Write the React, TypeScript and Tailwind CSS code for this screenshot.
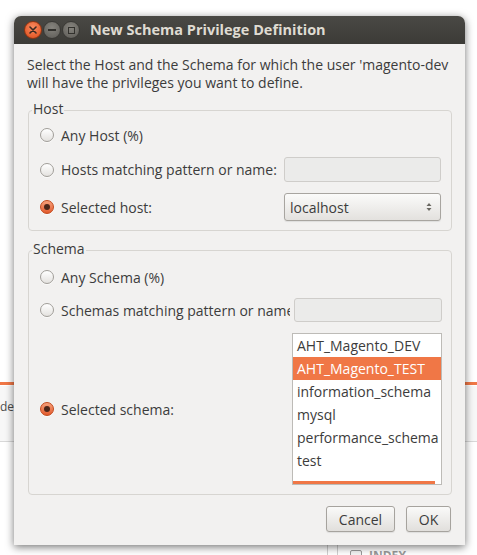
import React from 'react';

const font = { fontFamily: '"Open Sans", "Noto Sans", sans-serif' };

const Radio: React.FC<{ checked?: boolean }> = ({ checked }) =>
    checked ? (
        <span className="flex h-[14px] w-[14px] shrink-0 items-center justify-center rounded-full border border-[#c2491c] bg-gradient-to-b from-[#f6a07a] to-[#e2592a] shadow-[0_1px_0_rgba(255,255,255,0.6)]">
            <span className="h-[6px] w-[6px] rounded-full bg-[#4b2619]" />
        </span>
    ) : (
        <span className="h-[14px] w-[14px] shrink-0 rounded-full border border-[#a19e99] bg-gradient-to-b from-[#ffffff] to-[#e4e2df] shadow-[0_1px_0_rgba(255,255,255,0.6)]" />
    );

const RadioRow: React.FC<{ label: string; checked?: boolean; width: string }> = ({ label, checked, width }) => (
    <div className={`flex ${width} shrink-0 items-center gap-[7px] overflow-hidden pl-[11px]`}>
        <Radio checked={checked} />
        <span className="whitespace-nowrap">{label}</span>
    </div>
);

const schemas = ['AHT_Magento_DEV', 'AHT_Magento_TEST', 'information_schema', 'mysql', 'performance_schema', 'test'];

const entry = 'rounded-[3px] border border-[#cfcdca] bg-[#ebebea]';
const button =
    'h-[26px] rounded-[3px] border border-[#a6a39e] bg-gradient-to-b from-[#fafaf9] to-[#e1dfdc] shadow-[0_1px_1px_rgba(0,0,0,0.08)]';

export default function App() {
    return (
        <div className="relative h-[555px] w-[477px] overflow-hidden bg-white text-[14px] text-[#3c3c3c]" style={font}>
            {/* background app behind the dialog */}
            <div className="absolute left-0 top-[382px] h-[3px] w-[477px] bg-[#f07746]" />
            <div className="absolute left-0 top-[386px] h-[55px] w-[477px] bg-[#f7f7f7]" />
            <div className="absolute left-0 top-[398px] text-[12px] leading-[17px] text-[#4c4c4c]">ded</div>
            <div className="absolute left-0 top-[441px] h-px w-[477px] bg-[#d8d8d8]" />
            <div className="absolute left-[327px] top-[540px] h-[20px] w-px bg-[#d0d0d0]" />
            <div className="absolute left-[337px] top-[540px] h-[20px] w-px bg-[#d0d0d0]" />
            <div className="absolute left-[350px] top-[550px] h-[12px] w-[12px] rounded-[2px] border border-[#9a9a9a] bg-[#f4f4f4]" />
            <div className="absolute left-[369px] top-[547px] text-[12px] font-bold text-[#9a9a9a]">INDEX</div>

            {/* dialog window */}
            <div className="absolute left-[14px] top-[16px] flex h-[529px] w-[451px] flex-col overflow-hidden rounded-t-[7px] bg-[#f2f1f0] shadow-[0_2px_9px_rgba(0,0,0,0.55)]">
                <div className="flex h-[28px] shrink-0 items-center bg-gradient-to-b from-[#4a4945] to-[#3c3b37] pl-[10px]">
                    <div className="flex items-center gap-[1px]">
                        <span className="flex h-[18px] w-[18px] items-center justify-center rounded-full border border-[#8e3513] bg-[radial-gradient(circle_at_50%_35%,#f88c62,#dd4a17)]">
                            <svg width="8" height="8" viewBox="0 0 8 8"><path d="M1 1L7 7M7 1L1 7" stroke="#3a2a22" strokeWidth="1.6" strokeLinecap="round" /></svg>
                        </span>
                        <span className="flex h-[18px] w-[18px] items-center justify-center rounded-full border border-[#3a3935] bg-[radial-gradient(circle_at_50%_35%,#86847e,#5c5a55)]">
                            <span className="h-[1.5px] w-[8px] bg-[#32312d]" />
                        </span>
                        <span className="flex h-[18px] w-[18px] items-center justify-center rounded-full border border-[#3a3935] bg-[radial-gradient(circle_at_50%_35%,#86847e,#5c5a55)]">
                            <span className="h-[7px] w-[7px] border border-[#32312d]" />
                        </span>
                    </div>
                    <span className="ml-[10px] text-[14.5px] font-bold text-[#dfdbd2]">New Schema Privilege Definition</span>
                </div>

                <div className="flex flex-1 flex-col px-[13px]">
                    <p className="mt-[12px] leading-[18px]">
                        Select the Host and the Schema for which the user 'magento-dev<br />
                        will have the privileges you want to define.
                    </p>

                    {/* Host frame */}
                    <div className="relative ml-px mt-[18px] flex h-[121px] flex-col rounded-[4px] border border-[#d7d5d1] pt-[11px]">
                        <span className="absolute left-[3px] top-[-11px] bg-[#f2f1f0] px-px leading-[17px]">Host</span>
                        <div className="flex h-[26px]">
                            <RadioRow label="Any Host (%)" width="w-[255px]" />
                        </div>
                        <div className="mt-[9px] flex h-[25px]">
                            <RadioRow label="Hosts matching pattern or name:" width="w-[255px]" />
                            <div className={`${entry} w-[157px]`} />
                        </div>
                        <div className="mt-[11px] flex h-[28px]">
                            <RadioRow label="Selected host:" checked width="w-[255px]" />
                            <div className="flex w-[157px] items-center justify-between rounded-[3px] border border-[#a8a5a0] bg-gradient-to-b from-[#fbfbfa] to-[#e3e1de] pl-[5px] pr-[8px] shadow-[0_1px_1px_rgba(0,0,0,0.08)]">
                                <span>localhost</span>
                                <svg width="6" height="10" viewBox="0 0 6 10"><path d="M0.5 4L3 1L5.5 4ZM0.5 6L3 9L5.5 6Z" fill="#6b6963" /></svg>
                            </div>
                        </div>
                    </div>

                    {/* Schema frame */}
                    <div className="relative ml-px mt-[19px] flex h-[245px] flex-col rounded-[4px] border border-[#d7d5d1] pt-[13px]">
                        <span className="absolute left-[3px] top-[-11px] bg-[#f2f1f0] px-px leading-[17px]">Schema</span>
                        <div className="flex h-[26px]">
                            <RadioRow label="Any Schema (%)" width="w-[264px]" />
                        </div>
                        <div className="mt-[8px] flex h-[24px]">
                            <RadioRow label="Schemas matching pattern or name:" width="w-[261px]" />
                            <div className={`${entry} ml-[4px] w-[148px]`} />
                        </div>
                        <div className="mt-[11px] flex h-[152px]">
                            <RadioRow label="Selected schema:" checked width="w-[263px]" />
                            <div className="relative w-[150px] overflow-hidden border border-[#bdbbb7] bg-white">
                                {schemas.map((s, i) => (
                                    <div
                                        key={s}
                                        className={
                                            i === 1
                                                ? 'h-[23px] whitespace-nowrap bg-[#f07746] pl-[4px] leading-[23px] text-white'
                                                : 'h-[23px] whitespace-nowrap pl-[4px] leading-[23px]'
                                        }
                                    >
                                        {s}
                                    </div>
                                ))}
                                <div className="absolute bottom-0 left-0 h-[3px] w-[142px] bg-[#f07746]" />
                            </div>
                        </div>
                    </div>

                    <div className="mt-[11px] flex justify-end gap-[11px] pr-px">
                        <button className={`${button} w-[69px]`}>Cancel</button>
                        <button className={`${button} w-[45px]`}>OK</button>
                    </div>
                </div>
            </div>
        </div>
    );
}
